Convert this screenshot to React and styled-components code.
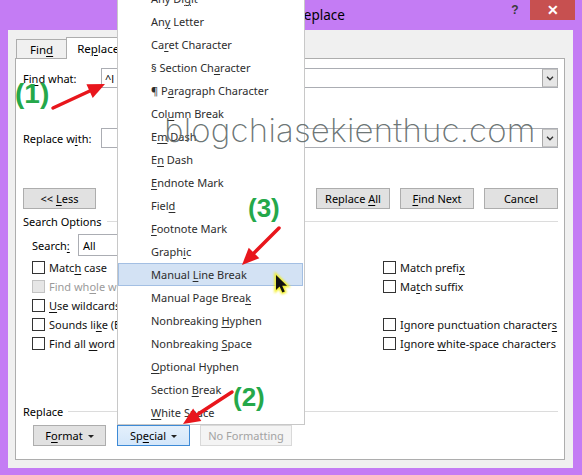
import React from "react";
import styled, { createGlobalStyle } from "styled-components";

const GlobalStyle = createGlobalStyle`
  html, body { margin: 0; padding: 0; }
  body {
    font-family: "Noto Sans", "Open Sans", sans-serif;
    font-size: 11px;
    color: #1a1a1a;
  }
  * { box-sizing: border-box; }
`;

const Screen = styled.div`
  position: relative;
  width: 582px;
  height: 475px;
  overflow: hidden;
  background: #c47cf4;
  display: flex;
  flex-direction: column;
`;

const TitleBar = styled.div`
  height: 30px;
  flex: none;
  display: grid;
  grid-template-columns: 1fr auto 1fr;
  align-items: start;
`;

const Title = styled.div`
  grid-column: 2;
  align-self: center;
  font-size: 13.5px;
  color: #000;
`;

const Controls = styled.div`
  grid-column: 3;
  justify-self: end;
  display: flex;
  margin-right: 7px;
`;

const HelpButton = styled.div`
  width: 30px;
  height: 20px;
  display: flex;
  align-items: center;
  justify-content: center;
  font-family: "Liberation Sans", sans-serif;
  font-weight: 700;
  font-size: 12px;
  color: #3a3a3a;
`;

const CloseButton = styled.div`
  width: 45px;
  height: 20px;
  background: #c75050;
  color: #fff;
  display: flex;
  align-items: center;
  justify-content: center;
  font-family: "Liberation Sans", sans-serif;
  font-weight: 700;
  font-size: 14px;
`;

const Client = styled.div`
  margin: 0 9px 0 8px;
  height: 438px;
  flex: none;
  background: #f0f0f0;
  padding: 7px 8px 8px 7px;
  display: flex;
  flex-direction: column;
`;

const TabStrip = styled.div`
  height: 21px;
  flex: none;
  display: flex;
  align-items: flex-end;
  padding-left: 1px;
`;

const Tab = styled.div`
  position: relative;
  z-index: ${(p) => (p.$active ? 2 : 1)};
  height: ${(p) => (p.$active ? 22 : 19)}px;
  margin-bottom: ${(p) => (p.$active ? -1 : 0)}px;
  padding: 0 ${(p) => p.$pad}px;
  display: flex;
  align-items: center;
  border: 1px solid #adadad;
  border-bottom: none;
  margin-left: ${(p) => (p.$first ? 0 : -1)}px;
  background: ${(p) => (p.$active ? "#fff" : "#f0f0f0")};
  font-size: 11.5px;
  color: #000;
`;

const Panel = styled.div`
  flex: 1;
  background: #fff;
  border: 1px solid #adadad;
  padding: 9px 6px 0 7px;
  display: flex;
  flex-direction: column;
`;

const Key = styled.span`
  text-decoration: underline;
  text-underline-offset: 2px;
`;

const FieldRow = styled.div`
  display: flex;
  align-items: center;
  height: 20px;
  margin-top: ${(p) => p.$mt || 0}px;
`;

const FieldLabel = styled.div`
  width: 78px;
  flex: none;
  color: #000;
`;

const ComboBox = styled.div`
  flex: 1;
  height: 20px;
  border: 1px solid #abadb3;
  display: flex;
  background: #fff;
`;

const ComboText = styled.div`
  flex: 1;
  padding-left: 3px;
  display: flex;
  align-items: center;
  color: #000;
`;

const ComboArrow = styled.div`
  width: 16px;
  margin: 0 -1px 0 0;
  background: #e6e6e6;
  border: 1px solid #a9a9a9;
  border-top-color: #c4c4c4;
  border-bottom-color: #c4c4c4;
  display: flex;
  align-items: center;
  justify-content: center;
`;

const ButtonRow = styled.div`
  display: flex;
  height: 21px;
  margin-top: ${(p) => p.$mt || 0}px;
  padding-left: ${(p) => p.$pl || 0}px;
`;

const Spacer = styled.div`
  flex: 1;
`;

const Button = styled.div`
  width: ${(p) => p.$w}px;
  height: 21px;
  flex: none;
  margin-left: ${(p) => p.$ml || 0}px;
  border: 1px solid ${(p) => (p.$pressed ? "#3d8ad6" : p.$disabled ? "#d9d9d9" : "#adadad")};
  background: ${(p) =>
    p.$pressed
      ? "linear-gradient(#e4f0fc, #d3e6fa)"
      : p.$disabled
      ? "#f4f4f4"
      : "#e1e1e1"};
  color: ${(p) => (p.$disabled ? "#a3a3a3" : "#000")};
  display: flex;
  align-items: center;
  justify-content: center;
  gap: 5px;
  font-size: 11px;
  white-space: pre;
`;

const Caret = styled.span`
  width: 0;
  height: 0;
  border-left: 3px solid transparent;
  border-right: 3px solid transparent;
  border-top: 3px solid #222;
  margin-top: 1px;
`;

const GroupHeader = styled.div`
  display: flex;
  align-items: center;
  gap: 5px;
  height: 14px;
  margin-top: ${(p) => p.$mt}px;
  color: #000;
  &::after {
    content: "";
    flex: 1;
    height: 1px;
    background: #dcdcdc;
  }
`;

const SearchRow = styled.div`
  display: flex;
  align-items: center;
  height: 22px;
  margin-top: 6px;
  padding-left: 9px;
`;

const SearchLabel = styled.div`
  width: 46px;
  color: #000;
`;

const SelectBox = styled.div`
  width: 130px;
  height: 22px;
  border: 1px solid #abadb3;
  display: flex;
  align-items: center;
  padding-left: 4px;
  color: #000;
`;

const OptionsGrid = styled.div`
  display: grid;
  grid-template-columns: 351px 1fr;
  margin-top: 2px;
  padding-left: 9px;
`;

const OptionColumn = styled.div`
  display: flex;
  flex-direction: column;
`;

const OptionRow = styled.div`
  height: 19px;
  display: flex;
  align-items: center;
  gap: 4px;
  white-space: nowrap;
  color: ${(p) => (p.$disabled ? "#9b9b9b" : "#111")};
`;

const Box = styled.span`
  width: 13px;
  height: 13px;
  flex: none;
  border: 1px solid ${(p) => (p.$disabled ? "#c2c2c2" : "#333")};
  background: ${(p) => (p.$disabled ? "#e6e6e6" : "#fff")};
`;

const Menu = styled.div`
  position: absolute;
  left: 117px;
  top: -14px;
  width: 188px;
  border: 1px solid #c8c8c8;
  background: #fff;
  z-index: 5;
  display: flex;
  flex-direction: column;
`;

const MenuItem = styled.div`
  height: 23px;
  flex: none;
  display: flex;
  align-items: center;
  padding-left: ${(p) => (p.$hot ? 32 : 33)}px;
  margin-right: ${(p) => (p.$hot ? 1 : 0)}px;
  color: #2d2d2d;
  font-size: 11px;
  background: ${(p) => (p.$hot ? "#d3e2f4" : "transparent")};
  border: ${(p) => (p.$hot ? "1px solid #a3bfe3" : "none")};
`;

const Watermark = styled.div`
  position: absolute;
  left: 164px;
  top: 110px;
  z-index: 6;
  font-family: "Inter", "DejaVu Sans", sans-serif;
  font-weight: 200;
  font-size: 33px;
  letter-spacing: 0.2px;
  color: rgba(95, 106, 106, 0.92);
  white-space: nowrap;
  pointer-events: none;
`;

const StepLabel = styled.div`
  position: absolute;
  left: ${(p) => p.$x}px;
  top: ${(p) => p.$y}px;
  z-index: 8;
  font-family: "Liberation Sans", sans-serif;
  font-weight: 700;
  font-size: ${(p) => p.$size}px;
  line-height: 1;
  color: #25a84a;
`;

const Overlay = styled.svg`
  position: absolute;
  left: 0;
  top: 0;
  z-index: 7;
  pointer-events: none;
`;

function Arrow({ from, to }) {
  const [x1, y1] = from;
  const [x2, y2] = to;
  const dx = x2 - x1;
  const dy = y2 - y1;
  const len = Math.hypot(dx, dy);
  const ux = dx / len;
  const uy = dy / len;
  const hl = 17;
  const hw = 7.5;
  const bx = x2 - ux * hl;
  const by = y2 - uy * hl;
  const nx = -uy;
  const ny = ux;
  const pts = `${x2},${y2} ${bx + nx * hw},${by + ny * hw} ${bx - nx * hw},${by - ny * hw}`;
  return (
    <g>
      <line x1={x1} y1={y1} x2={bx + ux * 2} y2={by + uy * 2} stroke="#e8161c" strokeWidth="3.5" strokeLinecap="round" />
      <polygon points={pts} fill="#e8161c" />
    </g>
  );
}

function Chevron() {
  return (
    <svg width="8" height="5" viewBox="0 0 8 5">
      <path d="M1 0.8 L4 3.8 L7 0.8" fill="none" stroke="#333" strokeWidth="1.4" />
    </svg>
  );
}

const menuItems = [
  ["Any Digit", 6],
  ["Any Letter", 2],
  ["Caret Character", 2],
  ["§ Section Character", 12],
  ["¶ Paragraph Character", 3],
  ["Column Break", 3],
  ["Em Dash", 1],
  ["En Dash", 1],
  ["Endnote Mark", 0],
  ["Field", 4],
  ["Footnote Mark", 0],
  ["Graphic", 5],
  ["Manual Line Break", 7],
  ["Manual Page Break", 16],
  ["Nonbreaking Hyphen", 12],
  ["Nonbreaking Space", 12],
  ["Optional Hyphen", 0],
  ["Section Break", 8],
  ["White Space", 0],
];

function Label({ text, k }) {
  if (k === undefined || k < 0) return <span>{text}</span>;
  return (
    <span>
      {text.slice(0, k)}
      <Key>{text[k]}</Key>
      {text.slice(k + 1)}
    </span>
  );
}

function Option({ text, k, disabled }) {
  return (
    <OptionRow $disabled={disabled}>
      <Box $disabled={disabled} />
      <Label text={text} k={k} />
    </OptionRow>
  );
}

export default function App() {
  return (
    <>
      <GlobalStyle />
      <Screen>
        <TitleBar>
          <Title>Find and Replace</Title>
          <Controls>
            <HelpButton>?</HelpButton>
            <CloseButton>✕</CloseButton>
          </Controls>
        </TitleBar>
        <Client>
          <TabStrip>
            <Tab $first $pad={13}>
              <Label text="Find" k={3} />
            </Tab>
            <Tab $active $pad={10}>
              <Label text="Replace" k={2} />
            </Tab>
            <Tab $pad={10}>
              <Label text="Go To" k={0} />
            </Tab>
          </TabStrip>
          <Panel>
            <FieldRow>
              <FieldLabel>
                <Label text="Find what:" k={2} />
              </FieldLabel>
              <ComboBox>
                <ComboText>^l</ComboText>
                <ComboArrow>
                  <Chevron />
                </ComboArrow>
              </ComboBox>
            </FieldRow>
            <FieldRow $mt={40}>
              <FieldLabel>
                <Label text="Replace with:" k={9} />
              </FieldLabel>
              <ComboBox>
                <ComboText />
                <ComboArrow>
                  <Chevron />
                </ComboArrow>
              </ComboBox>
            </FieldRow>
            <ButtonRow $mt={40}>
              <Button $w={73}>
                <Label text="<< Less" k={3} />
              </Button>
              <Spacer />
              <Button $w={72}>
                <Label text="Replace" k={0} />
              </Button>
              <Button $w={74} $ml={12}>
                <Label text="Replace All" k={8} />
              </Button>
              <Button $w={74} $ml={10}>
                <Label text="Find Next" k={0} />
              </Button>
              <Button $w={74} $ml={10}>
                <Label text="Cancel" />
              </Button>
            </ButtonRow>
            <GroupHeader $mt={5}>Search Options</GroupHeader>
            <SearchRow>
              <SearchLabel>
                <Label text="Search:" k={6} />
              </SearchLabel>
              <SelectBox>All</SelectBox>
            </SearchRow>
            <OptionsGrid>
              <OptionColumn>
                <Option text="Match case" k={4} />
                <Option text="Find whole words only" k={7} disabled />
                <Option text="Use wildcards" k={0} />
                <Option text="Sounds like (English)" k={9} />
                <Option text="Find all word forms (English)" k={9} />
              </OptionColumn>
              <OptionColumn>
                <Option text="Match prefix" k={11} />
                <Option text="Match suffix" k={2} />
                <OptionRow />
                <Option text="Ignore punctuation characters" k={28} />
                <Option text="Ignore white-space characters" k={7} />
              </OptionColumn>
            </OptionsGrid>
            <GroupHeader $mt={51}>Replace</GroupHeader>
            <ButtonRow $mt={7} $pl={10}>
              <Button $w={73}>
                <Label text="Format" k={1} />
                <Caret />
              </Button>
              <Button $w={73} $ml={11} $pressed>
                <Label text="Special" k={2} />
                <Caret />
              </Button>
              <Button $w={92} $ml={10} $disabled>
                <Label text="No Formatting" />
              </Button>
            </ButtonRow>
          </Panel>
        </Client>

        <Menu>
          {menuItems.map(([t, k], i) => (
            <MenuItem key={t} $hot={i === 12}>
              <Label text={t} k={k} />
            </MenuItem>
          ))}
        </Menu>

        <Watermark>blogchiasekienthuc.com</Watermark>

        <Overlay width="582" height="475" viewBox="0 0 582 475">
          <defs>
            <filter id="glow" x="-50%" y="-50%" width="200%" height="200%">
              <feGaussianBlur stdDeviation="1.2" />
            </filter>
          </defs>
          <Arrow from={[53, 108]} to={[105, 84]} />
          <Arrow from={[279, 228]} to={[242, 265]} />
          <Arrow from={[232, 392]} to={[183, 424]} />
          <g transform="translate(276,275)">
            <path
              d="M0 0 L0 15 L3.6 11.6 L6.4 17.6 L8.8 16.6 L6.2 10.8 L11 10.8 Z"
              fill="#f2ef1a"
              stroke="#f2ef1a"
              strokeWidth="3"
              filter="url(#glow)"
            />
            <path
              d="M0 0 L0 15 L3.6 11.6 L6.4 17.6 L8.8 16.6 L6.2 10.8 L11 10.8 Z"
              fill="#111"
            />
          </g>
        </Overlay>

        <StepLabel $x={15} $y={80} $size={28}>(1)</StepLabel>
        <StepLabel $x={248} $y={195} $size={26}>(3)</StepLabel>
        <StepLabel $x={233} $y={384} $size={26}>(2)</StepLabel>
      </Screen>
    </>
  );
}
